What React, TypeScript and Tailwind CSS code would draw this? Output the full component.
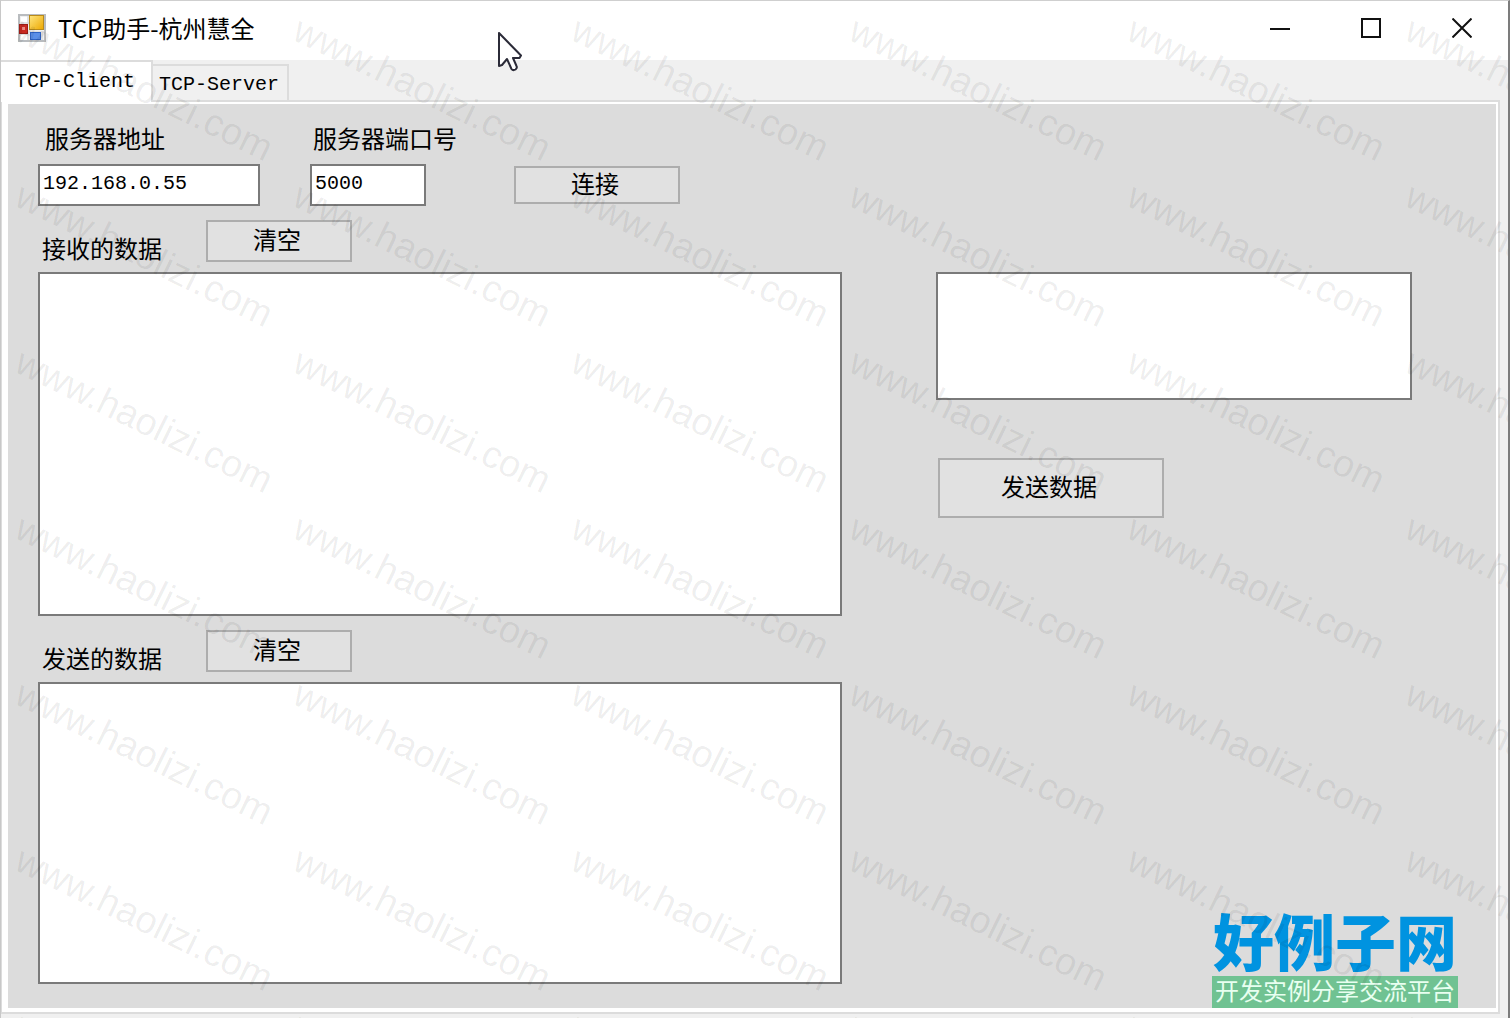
import React, { useState } from "react";

const WATERMARKS = Array.from({ length: 42 }, (_, i) => i);

const BUTTON =
  "border-2 border-[#adadad] bg-[#e1e1e1] pb-1 pr-1 text-2xl leading-7 text-black";
const FIELD = "block border-2 border-[#7a7a7a] bg-white text-black outline-none";
const MONO = "font-['Liberation_Mono','Noto_Sans_CJK_SC',monospace]";

const AppIcon = () => (
  <svg width="28" height="28" viewBox="0 0 28 28" aria-hidden="true">
    <defs>
      <linearGradient id="gold" x1="0" y1="0" x2="1" y2="1">
        <stop offset="0" stopColor="#ffe680" />
        <stop offset="1" stopColor="#eda800" />
      </linearGradient>
    </defs>
    <rect x="1" y="1" width="26" height="26" fill="#f0f0f0" stroke="#b9bcbf" strokeWidth="2" />
    <path d="M2 9H12M10 2V10M2 21H12M10 20V26M24 17V26M12 18H26" stroke="#d0d2d4" strokeWidth="1" />
    <rect x="3" y="3" width="6" height="5" fill="#fff" />
    <rect x="3" y="21" width="6" height="5" fill="#fff" />
    <rect x="11.5" y="1.5" width="14" height="14" fill="url(#gold)" stroke="#b98b1a" />
    <rect x="1.5" y="10.5" width="8" height="9" fill="#c92a22" stroke="#9c1d17" />
    <rect x="4" y="13" width="3" height="3" fill="#ee8a80" />
    <rect x="12.5" y="18.5" width="10" height="7" fill="#5b8fe8" stroke="#2f63c4" />
  </svg>
);

const Cursor = () => (
  <svg
    className="pointer-events-none absolute left-[33%] top-[31px]"
    width="26"
    height="40"
    viewBox="0 0 26 40"
    aria-hidden="true"
  >
    <path
      d="M1 1V34L4 33L9 27L13.500 37Q15 39 17.500 37.500Q19.500 36 18.500 34L15 26H21.500L23 23.500Z"
      fill="#fff"
      stroke="#2b2b38"
      strokeWidth="2"
      strokeLinejoin="round"
    />
  </svg>
);

const TitleBar = () => (
  <header className="flex h-[59px] items-center bg-white pb-[5px] pl-[17px] pr-px">
    <AppIcon />
    <h1 className="ml-3 flex-1 text-2xl leading-8 text-black">TCP助手-杭州慧全</h1>
    {/* Window controls */}
    <button aria-label="最小化" className="flex h-full w-[91px] items-center justify-center">
      <svg width="20" height="20" viewBox="0 0 20 20">
        <path d="M0 11H20" stroke="#111" strokeWidth="2" />
      </svg>
    </button>
    <button aria-label="最大化" className="flex h-full w-[91px] items-center justify-center">
      <svg width="20" height="20" viewBox="0 0 20 20">
        <rect x="1" y="1" width="18" height="18" fill="none" stroke="#111" strokeWidth="2" />
      </svg>
    </button>
    <button aria-label="关闭" className="flex h-full w-[91px] items-center justify-center">
      <svg width="20" height="20" viewBox="0 0 20 20">
        <path d="M0.500 0.500L19.500 19.500M19.500 0.500L0.500 19.500" stroke="#111" strokeWidth="2" />
      </svg>
    </button>
  </header>
);

interface LogBoxProps {
  id: string;
  label: string;
  className: string;
}

const LogBox: React.FC<LogBoxProps> = ({ id, label, className }) => {
  const [text, setText] = useState("");

  return (
    <div className="pt-3.5">
      <div className="flex h-[42px] items-end">
        <label htmlFor={id} className="w-[168px] pl-1 text-2xl leading-7">
          {label}
        </label>
        <button onClick={() => setText("")} className={`${BUTTON} h-full w-[146px]`}>
          清空
        </button>
      </div>
      <textarea
        id={id}
        value={text}
        onChange={(e) => setText(e.target.value)}
        className={`${FIELD} mt-2.5 w-full resize-none p-1 text-xl ${className}`}
      />
    </div>
  );
};

const Watermark = () => (
  <div
    aria-hidden="true"
    className="pointer-events-none absolute inset-0 grid auto-rows-[166px] grid-cols-[repeat(6,278px)] overflow-hidden pl-[26px] pt-2"
  >
    {WATERMARKS.map((i) => (
      <span
        key={i}
        className="origin-top-left rotate-[26deg] whitespace-nowrap font-['Liberation_Sans',sans-serif] text-[38px] leading-10 text-black/7"
      >
        www.haolizi.com
      </span>
    ))}
  </div>
);

const SiteLogo = () => (
  <div className="absolute bottom-0 right-[38px] text-center">
    <div className="pb-0.5 text-[61px] font-black leading-[68px] text-[#0093e0]">好例子网</div>
    <div className="bg-[#70c292] px-[3px] pb-1 text-2xl leading-7 text-[#e8fff0]">
      开发实例分享交流平台
    </div>
  </div>
);

const App: React.FC = () => {
  const [tab, setTab] = useState("client");

  return (
    <div className="relative flex min-h-screen flex-col overflow-hidden border-l border-r-2 border-t border-l-[#c8c8c8] border-r-[#7c7c7c] border-t-[#cfcfcf] bg-[#f0f0f0] font-['Noto_Sans_CJK_SC',sans-serif] text-black">
      <TitleBar />

      <div role="tablist" className={`flex h-10 items-end text-xl leading-6 ${MONO}`}>
        <button
          role="tab"
          aria-selected={tab === "client"}
          onClick={() => setTab("client")}
          className="relative -mb-0.5 h-[42px] border-r-2 border-t-2 border-[#dcdcdc] bg-white pl-3.5 pr-4"
        >
          TCP-Client
        </button>
        <button
          role="tab"
          aria-selected={tab === "server"}
          onClick={() => setTab("server")}
          className="h-9 border-r-2 border-t-2 border-[#dcdcdc] pl-1.5 pr-2 pt-1"
        >
          TCP-Server
        </button>
      </div>

      {/* Tab page */}
      <main className="mb-1 mr-2 flex flex-1 flex-col border-2 border-l border-[#dcdcdc] bg-white pb-1 pl-1.5 pr-0.5 pt-0.5">
        <div className="relative flex-1 bg-[#dcdcdc] pb-6 pl-[30px] pr-[84px] pt-[18px]">
          <div className="flex items-end">
            <div className="w-[222px]">
              <label htmlFor="host" className="block pl-[7px] text-2xl leading-8">
                服务器地址
              </label>
              <input
                id="host"
                defaultValue="192.168.0.55"
                className={`${FIELD} ${MONO} mt-2.5 h-[42px] w-full pb-1 pl-[3px] text-xl`}
              />
            </div>
            <div className="ml-[50px] w-[116px]">
              <label htmlFor="port" className="block whitespace-nowrap pl-[3px] text-2xl leading-8">
                服务器端口号
              </label>
              <input
                id="port"
                defaultValue="5000"
                className={`${FIELD} ${MONO} mt-2.5 h-[42px] w-full pb-1 pl-[3px] text-xl`}
              />
            </div>
            <button className={`${BUTTON} mb-0.5 ml-[88px] h-[38px] w-[166px]`}>连接</button>
          </div>

          <div className="grid grid-cols-[804fr_476fr] gap-x-[94px]">
            <div>
              <LogBox id="received" label="接收的数据" className="h-[344px]" />
              <LogBox id="sent" label="发送的数据" className="h-[302px]" />
            </div>
            <div className="pt-[66px]">
              <textarea
                aria-label="发送内容"
                className={`${FIELD} h-32 w-full resize-none p-1 text-xl`}
              />
              <button className={`${BUTTON} ml-0.5 mt-[58px] h-[60px] w-[226px]`}>
                发送数据
              </button>
            </div>
          </div>

          <SiteLogo />
        </div>
      </main>

      <Watermark />
      <Cursor />
    </div>
  );
};

export default App;
